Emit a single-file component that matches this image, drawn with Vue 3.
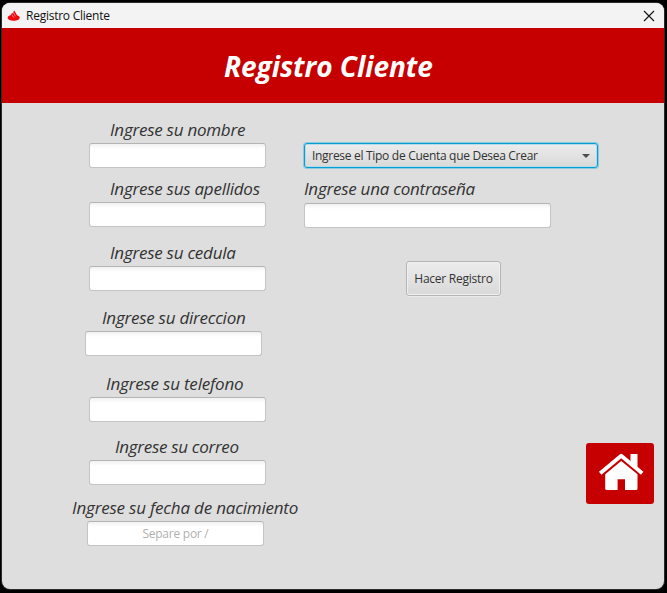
<script setup>
import { ref } from 'vue'

const fields = ref([
  { id: 'nombre', label: 'Ingrese su nombre', value: '' },
  { id: 'apellidos', label: 'Ingrese sus apellidos', value: '' },
  { id: 'cedula', label: 'Ingrese su cedula', value: '' },
  { id: 'direccion', label: 'Ingrese su direccion', value: '' },
  { id: 'telefono', label: 'Ingrese su telefono', value: '' },
  { id: 'correo', label: 'Ingrese su correo', value: '' },
  { id: 'nacimiento', label: 'Ingrese su fecha de nacimiento', value: '', placeholder: 'Separe por /' }
])
const password = ref('')
</script>

<template>
  <div class="desktop">
    <main class="window">
      <div class="titlebar">
        <svg class="flame" width="14" height="12" viewBox="0 0 14 12">
          <path d="M3.400 5.300C1.500 5.800.7 6.600.7 7.700.7 9.500 3.400 10.800 6.700 10.800s6-1.300 6-3.100c0-1.100-.9-1.900-2.600-2.400L7.300.6C6.300 1.500 6.200 2.200 6.500 3L4.800 3.200Z" fill="#f00a12" />
          <path d="M4.800 4.500 6.800 7.600M6.600 3 8.400 6.300" stroke="#f7b5b5" stroke-width=".7" fill="none" />
        </svg>
        <span class="caption">Registro Cliente</span>
        <svg class="close" width="12" height="12" viewBox="0 0 12 12">
          <path d="M1 1 11 11M11 1 1 11" stroke="#111" stroke-width="1.1" fill="none" />
        </svg>
      </div>
      <header class="banner"><h1>Registro Cliente</h1></header>
      <div class="content">
        <section class="personal">
          <div v-for="f in fields" :key="f.id" class="field" :class="f.id">
            <label :for="f.id">{{ f.label }}</label>
            <input :id="f.id" v-model="f.value" type="text" :placeholder="f.placeholder" />
          </div>
        </section>
        <section class="account">
          <div class="combo">
            <span>Ingrese el Tipo de Cuenta que Desea Crear</span>
            <svg width="8" height="4" viewBox="0 0 8 4"><path d="M0 0H8L4 4Z" fill="#4d4d4d" /></svg>
          </div>
          <div class="field password">
            <label for="clave">Ingrese una contraseña</label>
            <input id="clave" v-model="password" type="password" />
          </div>
          <button class="submit" type="button"><span>Hacer Registro</span></button>
          <button class="home" type="button" aria-label="Inicio">
            <svg width="46" height="38" viewBox="0 0 46 38">
              <path d="M32.500 1H39.500V15L32.500 9Z" fill="#fff" />
              <path d="M2.200 20.300 23.200 2.700 44.200 20.300" fill="none" stroke="#fff" stroke-width="3.800" stroke-linejoin="round" />
              <path d="M7.200 21.300 23.200 8 39.500 21.300V35.500Q39.500 37 38 37H27V26.300H19.600V37H8.700Q7.200 37 7.200 35.500Z" fill="#fff" />
            </svg>
          </button>
        </section>
      </div>
    </main>
  </div>
</template>

<style>
body { margin: 0; background: #000; }
</style>

<style scoped>
* { box-sizing: border-box; }
.desktop {
  width: 667px;
  height: 593px;
  padding: 3px 3px 4px 2px;
  background: #000;
  font-family: "Open Sans", "Noto Sans", sans-serif;
  color: #333;
}
.window {
  width: 662px;
  height: 586px;
  overflow: hidden;
  border-radius: 8px;
  background: #dedede;
  box-shadow: 0 0 0 1px #2b2b2b;
}
.titlebar {
  height: 25px;
  display: flex;
  align-items: center;
  padding: 0 9px 0 5px;
  background: #f3f3f3;
}
.caption {
  margin-left: 5px;
  font-size: 12px;
  line-height: 24px;
  letter-spacing: -0.25px;
  color: #111;
}
.close { margin-left: auto; }
.banner {
  height: 75px;
  background: #c60000;
}
h1 {
  margin: 0;
  padding-left: 222px;
  font-size: 28px;
  line-height: 76px;
  font-weight: 700;
  font-style: italic;
  letter-spacing: -0.05px;
  white-space: nowrap;
  color: #fff;
}
.content { display: flex; height: 486px; }
.personal { width: 302px; padding-top: 16px; }
.field {
  height: 49px;
  display: flex;
  flex-direction: column;
  padding-left: 87px;
}
label {
  display: block;
  height: 24px;
  padding-left: 21px;
  font-size: 17px;
  line-height: 22px;
  font-style: italic;
  letter-spacing: -0.25px;
  white-space: nowrap;
}
input {
  display: block;
  flex: none;
  width: 177px;
  height: 25px;
  padding: 0 7px;
  border: 1px solid #c4c4c4;
  border-top-color: #b4b4b4;
  border-radius: 3px;
  background: linear-gradient(#f1f1f1, #fff 5px);
  font: 12px "Open Sans", sans-serif;
  letter-spacing: -0.25px;
  text-align: left;
  outline: none;
}
input::placeholder { color: #b0b0b0; opacity: 1; }
.apellidos { margin-top: 10px; }
.cedula { margin-top: 15px; }
.direccion { margin-top: 16px; padding-left: 83px; }
.direccion label { padding-left: 17px; }
.telefono { margin-top: 17px; }
.telefono label { padding-left: 17px; letter-spacing: -0.2px; }
.correo { margin-top: 14px; }
.correo label { padding-left: 26px; letter-spacing: -0.3px; }
.nacimiento { margin-top: 12px; padding-left: 70px; }
.nacimiento label { padding-left: 0; letter-spacing: -0.2px; }
.nacimiento input { margin-left: 15px; text-align: center; }
.account {
  flex: 1;
  display: flex;
  flex-direction: column;
  align-items: flex-start;
  padding-top: 40px;
}
.combo {
  width: 294px;
  height: 25px;
  display: flex;
  align-items: center;
  justify-content: space-between;
  padding: 0 7px;
  border: 1px solid #039ed3;
  border-radius: 3px;
  background: linear-gradient(#ececec, #d9d9d9);
  box-shadow: 0 0 0 1px #8fc9dd, inset 0 0 0 1px #b5dbe8;
  font-size: 12px;
  letter-spacing: -0.3px;
  white-space: nowrap;
}
.password { margin-top: 10px; height: 50px; padding: 0; }
.password label { height: 25px; padding-left: 0; }
.password input { width: 247px; }
.submit {
  width: 95px;
  height: 35px;
  margin: 33px 0 0 102px;
  padding: 0;
  border: 1px solid #b5b5b5;
  border-radius: 3px;
  background: linear-gradient(#ececec, #d9d9d9);
  box-shadow: inset 0 0 0 1px #f0f0f0, 0 1px 0 #e9e9e9;
  color: #333;
  font: 12px "Open Sans", sans-serif;
  letter-spacing: -0.25px;
  white-space: nowrap;
}
.home {
  width: 68px;
  height: 61px;
  display: flex;
  margin: 147px 0 0 282px;
  padding: 10px 0 0 12px;
  border: 0;
  border-radius: 3px;
  background: #c60000;
}
</style>
